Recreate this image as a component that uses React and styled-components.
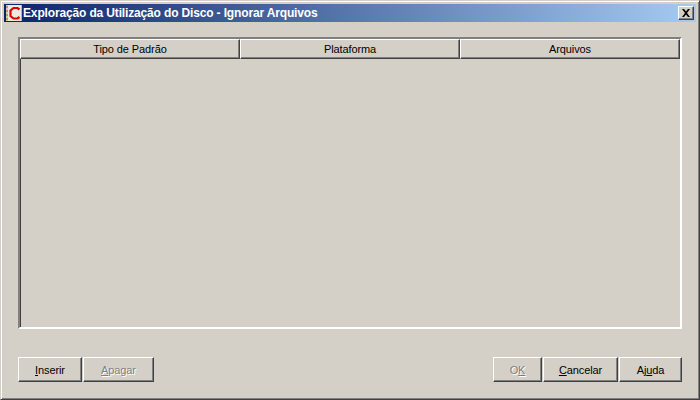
import { createGlobalStyle } from 'styled-components';
import styled from 'styled-components';

const Global = createGlobalStyle`
  html, body {
    margin: 0;
    padding: 0;
    background: #d4d0c8;
  }
`;

const Window = styled.div`
  box-sizing: border-box;
  width: 700px;
  height: 400px;
  display: flex;
  flex-direction: column;
  padding: 2px;
  background: #d4d0c8;
  border: 1px solid;
  border-color: #d4d0c8 #404040 #404040 #d4d0c8;
  box-shadow: inset 1px 1px 0 #fff, inset -1px -1px 0 #808080;
  font-family: "Liberation Sans", Arial, sans-serif;
  font-size: 11px;
  letter-spacing: -0.1px;
  color: #000;
`;

const TitleBar = styled.div`
  height: 18px;
  margin: 1px 1px 0 1px;
  padding: 0 2px;
  display: flex;
  align-items: center;
  background: linear-gradient(90deg, #0a246a, #a6caf0);
`;

const TitleText = styled.span`
  margin-left: 1px;
  flex: 1;
  font-size: 12px;
  font-weight: bold;
  letter-spacing: -0.15px;
  color: #fff;
  white-space: nowrap;
`;

const CloseButton = styled.div`
  box-sizing: border-box;
  width: 16px;
  height: 14px;
  display: flex;
  align-items: center;
  justify-content: center;
  background: #d4d0c8;
  border: 1px solid;
  border-color: #fff #404040 #404040 #fff;
  box-shadow: inset -1px -1px 0 #808080;
`;

const Body = styled.div`
  flex: 1;
  display: flex;
  flex-direction: column;
  padding: 15px 15px 0;
`;

const Panel = styled.div`
  box-sizing: border-box;
  height: 292px;
  border: 2px solid;
  border-color: #808080 #fff #fff #808080;
  box-shadow: inset 1px 0 0 #404040;
  background: #d4d0c8;
`;

const HeaderRow = styled.div`
  display: grid;
  grid-template-columns: repeat(3, 220px);
`;

const HeaderCell = styled.div`
  box-sizing: border-box;
  height: 20px;
  display: flex;
  align-items: center;
  justify-content: center;
  border: 1px solid;
  border-color: #fff #404040 #404040 #fff;
  box-shadow: inset -1px -1px 0 #808080;
`;

const ButtonRow = styled.div`
  margin-top: 28px;
  display: flex;
  justify-content: space-between;
`;

const ButtonGroup = styled.div`
  display: flex;
  gap: 1px;
`;

const Button = styled.div`
  box-sizing: border-box;
  width: ${(p) => p.$w}px;
  height: 25px;
  display: flex;
  align-items: center;
  justify-content: center;
  background: #d4d0c8;
  border: 1px solid;
  border-color: #fff #404040 #404040 #fff;
  box-shadow: inset -1px -1px 0 #808080;
  color: ${(p) => (p.$disabled ? '#808080' : '#000')};
  text-shadow: ${(p) => (p.$disabled ? '1px 1px 0 #fff' : 'none')};

  u {
    text-underline-offset: 1px;
  }
`;

const AppIcon = () => (
  <svg width="16" height="16" viewBox="0 0 16 16">
    <rect width="16" height="16" fill="#ece9e2" />
    <rect x="0" y="0" width="2" height="16" fill="#d8c8a8" />
    <path d="M1 1v2M1 5v2M1 9v2M1 13v2" stroke="#a06030" strokeWidth="1" />
    <path d="M13.5 4.5 11.5 3H7.5L4.5 5.5v5.5L7.5 13.5h4l2-1.5" fill="none" stroke="#e00000" strokeWidth="2.2" />
    <rect x="15" y="0" width="1" height="16" fill="#b8b4a8" />
  </svg>
);

const CloseIcon = () => (
  <svg width="10" height="8" viewBox="0 0 10 8">
    <path d="M1 0h2l2 2.5L7 0h2L6 4l3 4H7L5 5.5 3 8H1l3-4z" fill="#000" />
  </svg>
);

const App = () => (
  <>
    <Global />
    <Window>
      <TitleBar>
        <AppIcon />
        <TitleText>Exploração da Utilização do Disco - Ignorar Arquivos</TitleText>
        <CloseButton>
          <CloseIcon />
        </CloseButton>
      </TitleBar>
      <Body>
        <Panel>
          <HeaderRow>
            <HeaderCell>Tipo de Padrão</HeaderCell>
            <HeaderCell>Plataforma</HeaderCell>
            <HeaderCell>Arquivos</HeaderCell>
          </HeaderRow>
        </Panel>
        <ButtonRow>
          <ButtonGroup>
            <Button $w={64}><span><u>I</u>nserir</span></Button>
            <Button $w={71} $disabled><span><u>A</u>pagar</span></Button>
          </ButtonGroup>
          <ButtonGroup>
            <Button $w={49} $disabled><span>O<u>K</u></span></Button>
            <Button $w={75}><span><u>C</u>ancelar</span></Button>
            <Button $w={63}><span>Aj<u>u</u>da</span></Button>
          </ButtonGroup>
        </ButtonRow>
      </Body>
    </Window>
  </>
);

export default App;
